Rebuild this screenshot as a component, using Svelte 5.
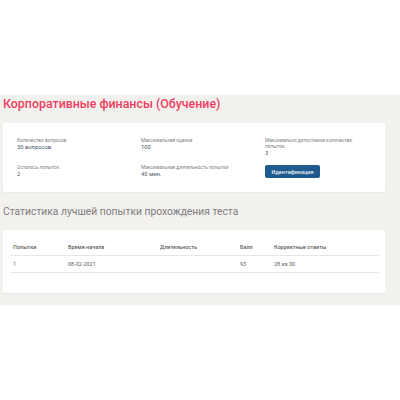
<script>
  const info = [
    { label: 'Количество вопросов', value: '30 вопросов' },
    { label: 'Максимальная оценка', value: '100' },
    { label: 'Максимально допустимое количество попыток', value: '3' },
    { label: 'Осталось попыток', value: '2' },
    { label: 'Максимальная длительность попытки', value: '40 мин.' }
  ];
</script>

<div class="page">
  <main>
    <h1>Корпоративные финансы (Обучение)</h1>
    <section class="card info">
      {#each info as item}
        <div class="item">
          <div class="label">{item.label}</div>
          <div class="value">{item.value}</div>
        </div>
      {/each}
      <div class="item"><button>Идентификация</button></div>
    </section>
    <h2>Статистика лучшей попытки прохождения теста</h2>
    <section class="card results">
      <table>
        <thead>
          <tr>
            <th class="c1">Попытки</th>
            <th class="c2">Время начала</th>
            <th class="c3">Длительность</th>
            <th class="c4">Балл</th>
            <th>Корректные ответы</th>
          </tr>
        </thead>
        <tbody>
          <tr>
            <td>1</td>
            <td>08-02-2021</td>
            <td></td>
            <td>93</td>
            <td>28 из 30</td>
          </tr>
        </tbody>
      </table>
    </section>
  </main>
</div>

<style>
  :global(body) {
    margin: 0;
    background: #fff;
  }
  .page {
    height: 400px;
    padding-top: 95px;
    box-sizing: border-box;
    font-family: Roboto, sans-serif;
  }
  main {
    background: #f2f1ed;
    height: 210px;
    padding: 0 15px 0 3px;
    overflow: hidden;
  }
  h1 {
    margin: 0;
    height: 28px;
    line-height: 17px;
    font-size: 12.4px;
    font-weight: 500;
    color: #f0405f;
  }
  .card {
    background: #fff;
    border-radius: 2px;
    box-shadow: 0 1px 1px #e9e8e3;
  }
  .info {
    height: 69px;
    box-sizing: border-box;
    padding: 15px 14px 0;
    display: grid;
    grid-template-columns: 124px 124px 1fr;
    grid-template-rows: 27px 27px;
  }
  .item {
    font-size: 4.8px;
    line-height: 6px;
  }
  .label {
    color: #808080;
  }
  .value {
    color: #44546a;
    font-size: 5.8px;
  }
  button {
    display: block;
    background: #1f5a8c;
    color: #e8eef4;
    border: 0;
    border-radius: 2px;
    width: 55px;
    height: 13px;
    padding: 0;
    font: 500 5.5px Roboto, sans-serif;
  }
  h2 {
    margin: 0;
    height: 38px;
    padding-top: 13px;
    box-sizing: border-box;
    line-height: 14px;
    font-size: 10.3px;
    font-weight: 400;
    color: #7d7d7d;
  }
  .results {
    height: 63px;
    box-sizing: border-box;
    padding: 9px 7px 0;
  }
  table {
    width: 369px;
    border-collapse: collapse;
    font-size: 5.5px;
    color: #5c5c5c;
  }
  th {
    text-align: left;
    font-weight: 500;
    height: 16px;
    padding: 0 0 0 3px;
    border-bottom: 1px solid #e6e6e6;
  }
  td {
    height: 16px;
    padding: 0 0 0 3px;
    border-bottom: 1px solid #e6e6e6;
  }
  .c1 { width: 52px; }
  .c2 { width: 89px; }
  .c3 { width: 77px; }
  .c4 { width: 31px; }
</style>
